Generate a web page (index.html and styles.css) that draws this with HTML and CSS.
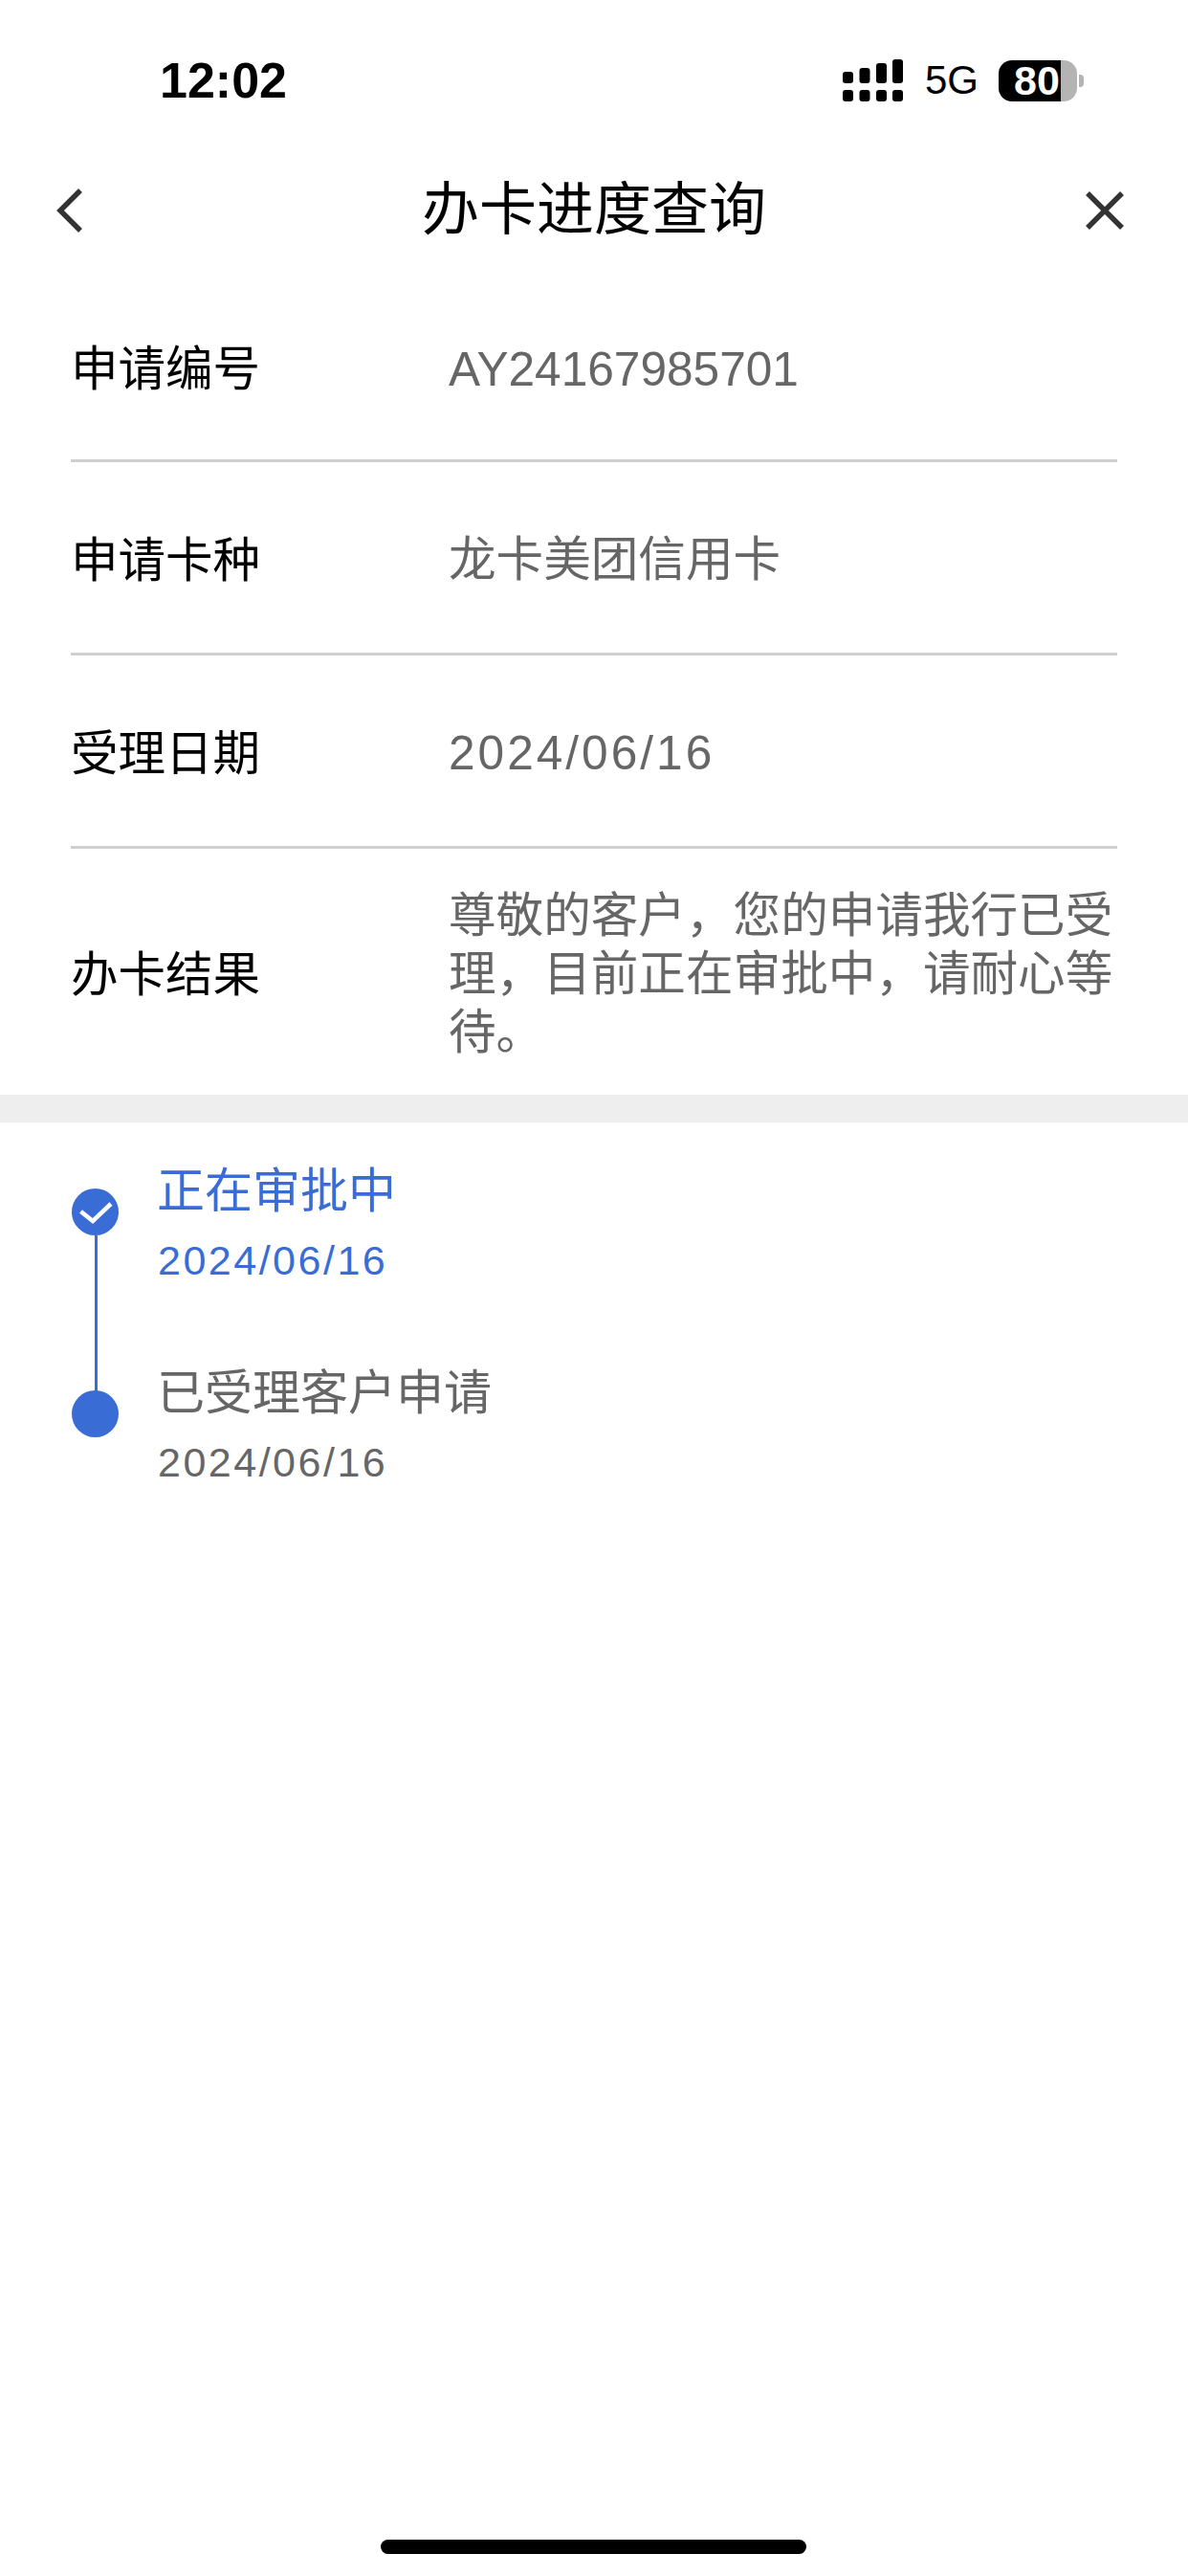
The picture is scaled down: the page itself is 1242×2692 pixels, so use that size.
FILE: index.html

```html
<!DOCTYPE html>
<html lang="zh-CN">
<head>
  <meta charset="UTF-8">
  <meta name="viewport" content="width=device-width, initial-scale=1.0">
  <title>办卡进度查询</title>
  <link rel="stylesheet" href="styles.css">
</head>
<body>
  <div class="page">
    <div class="status-bar">
      <span class="time">12:02</span>
      <div class="status-icons">
        <svg class="signal" width="63" height="44" viewBox="0 0 63 44">
          <rect x="0" y="13" width="11" height="12" rx="3"/>
          <rect x="17.5" y="9" width="11" height="16" rx="3"/>
          <rect x="35" y="4" width="11" height="21" rx="3"/>
          <rect x="52" y="0" width="11" height="25" rx="3"/>
          <rect x="0" y="32" width="11" height="12" rx="3"/>
          <rect x="17.5" y="32" width="11" height="12" rx="3"/>
          <rect x="35" y="32" width="11" height="12" rx="3"/>
          <rect x="52" y="32" width="11" height="12" rx="3"/>
        </svg>
        <span class="network">5G</span>
        <div class="battery">
          <div class="battery-body">
            <span class="battery-level">80</span>
          </div>
          <div class="battery-cap"></div>
        </div>
      </div>
    </div>

    <div class="nav-bar">
      <svg class="nav-back" width="30" height="50" viewBox="0 0 30 50">
        <path d="M26 4 L5 25 L26 46" fill="none" stroke="#333" stroke-width="5.5"/>
      </svg>
      <h1>办卡进度查询</h1>
      <svg class="nav-close" width="42" height="42" viewBox="0 0 42 42">
        <path d="M3 3 L39 39 M39 3 L3 39" fill="none" stroke="#333" stroke-width="5.5"/>
      </svg>
    </div>

    <div class="info">
      <div class="row row-first">
        <div class="label">申请编号</div>
        <div class="value">AY24167985701</div>
      </div>
      <div class="row">
        <div class="label">申请卡种</div>
        <div class="value">龙卡美团信用卡</div>
      </div>
      <div class="row">
        <div class="label">受理日期</div>
        <div class="value num-date">2024/06/16</div>
      </div>
      <div class="row row-result">
        <div class="label">办卡结果</div>
        <div class="value">尊敬的客户，您的申请我行已受理，目前正在审批中，请耐心等待。</div>
      </div>
    </div>

    <div class="band"></div>

    <div class="timeline">
      <div class="step active">
        <div class="marker">
          <svg width="49" height="49" viewBox="0 0 49 49">
            <circle cx="24.5" cy="24.5" r="24.5" fill="#3a6cd6"/>
            <path d="M9.5 24 L22 34 L41 16" fill="none" stroke="#fff" stroke-width="4.5"/>
          </svg>
        </div>
        <div class="step-text">
          <div class="step-title">正在审批中</div>
          <div class="step-date">2024/06/16</div>
        </div>
      </div>
      <div class="step">
        <div class="marker">
          <div class="dot"></div>
        </div>
        <div class="step-text">
          <div class="step-title">已受理客户申请</div>
          <div class="step-date">2024/06/16</div>
        </div>
      </div>
    </div>

    <div class="home-indicator"></div>
  </div>
</body>
</html>
```

FILE: styles.css

```css
* {
  box-sizing: border-box;
}

body {
  margin: 0;
  background: #fff;
  font-family: "Liberation Sans", "Noto Sans CJK SC", sans-serif;
}

.page {
  position: relative;
  width: 1242px;
  height: 2692px;
  overflow: hidden;
  background: #fff;
}

.status-bar {
  height: 168px;
  padding: 62px 109px 0 167px;
  display: flex;
  justify-content: space-between;
  align-items: flex-start;
}

.time {
  font-size: 52px;
  line-height: 44px;
  font-weight: 700;
  color: #000;
}

.status-icons {
  display: flex;
  align-items: center;
  height: 44px;
}

.signal {
  margin-right: 23px;
}

.network {
  font-size: 42px;
  line-height: 44px;
  color: #000;
  margin-right: 21px;
}

.battery {
  display: flex;
  align-items: center;
}

.battery-body {
  width: 82px;
  height: 43px;
  border-radius: 14px;
  background: linear-gradient(to right, #000 0, #000 65px, #b4b4b4 65px);
  padding-left: 16px;
}

.battery-level {
  display: block;
  font-size: 43px;
  line-height: 43px;
  font-weight: 700;
  color: #fff;
}

.battery-cap {
  width: 5px;
  height: 13px;
  margin-left: 2px;
  background: #b4b4b4;
  border-radius: 0 4px 4px 0;
}

.nav-bar {
  height: 104px;
  padding: 0 58px;
  display: grid;
  grid-template-columns: 1fr auto 1fr;
  align-items: center;
}

.nav-close {
  justify-self: end;
  margin-right: 8px;
}

h1 {
  margin: 0;
  font-size: 60px;
  line-height: 104px;
  font-weight: 400;
  color: #000;
}

.info {
  padding: 0 74px;
}

.row {
  height: 202px;
  padding-top: 6px;
  display: flex;
  align-items: center;
  border-bottom: 3px solid #cfcfcf;
}

.row.row-first {
  height: 211px;
  padding-top: 20px;
}

.row.row-result {
  height: 257px;
  padding-top: 6px;
  border-bottom: none;
}

.label {
  width: 395px;
  flex-shrink: 0;
  font-size: 49.5px;
  line-height: 62px;
  color: #000;
}

.value {
  font-size: 49.6px;
  line-height: 61px;
  color: #666;
}

.num-date {
  letter-spacing: 3px;
}

.band {
  height: 29px;
  background: #eee;
}

.timeline {
  padding: 40px 0 0 75px;
}

.step {
  display: flex;
  height: 211px;
}

.marker {
  position: relative;
  width: 49px;
  flex-shrink: 0;
  padding-top: 29px;
  margin-right: 42px;
}

.marker svg {
  display: block;
}

.step.active .marker::after {
  content: "";
  position: absolute;
  left: 24px;
  top: 78px;
  width: 3px;
  height: 165px;
  background: #3a6cd6;
}

.dot {
  width: 49px;
  height: 49px;
  border-radius: 50%;
  background: #3a6cd6;
}

.step-text {
  padding-top: 2px;
}

.step-title {
  font-size: 50px;
  line-height: 60px;
  margin-left: -2px;
  color: #666;
}

.step-date {
  font-size: 43px;
  line-height: 60px;
  margin-top: 12px;
  margin-left: -1px;
  letter-spacing: 2.5px;
  color: #666;
}

.step.active .step-title,
.step.active .step-date {
  color: #3a6cd6;
}

.home-indicator {
  position: absolute;
  left: 398px;
  top: 2654px;
  width: 445px;
  height: 15px;
  border-radius: 8px;
  background: #000;
}
```
